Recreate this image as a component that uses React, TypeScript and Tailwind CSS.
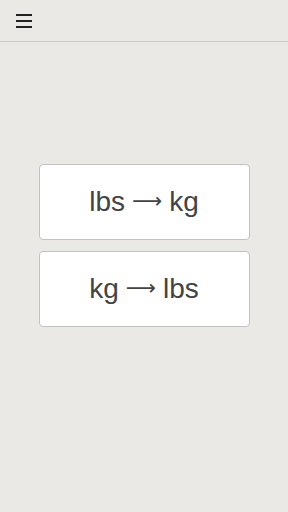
import React from "react";

const options = [
  ["lbs", "kg"],
  ["kg", "lbs"],
];

const App = () => {
  return (
    <div
      className="flex h-[512px] w-[288px] flex-col bg-[#ebe9e6] text-[#444]"
      style={{ fontFamily: '"Liberation Sans", Arial, sans-serif' }}
    >
      <header className="flex h-[42px] shrink-0 items-center border-b border-[#c9c9c9] px-4">
        <button type="button" aria-label="Menu" className="flex h-4 w-4 flex-col justify-between py-[1px]">
          <span className="h-[2px] w-4 bg-[#222]" />
          <span className="h-[2px] w-4 bg-[#222]" />
          <span className="h-[2px] w-4 bg-[#222]" />
        </button>
      </header>
      <main className="flex flex-col items-center gap-[11px] pt-[122px]">
        {options.map(([from, to]) => (
          <button
            key={from}
            type="button"
            className="flex h-[76px] w-[211px] items-center justify-center rounded-[4px] border border-[#c2c2c2] bg-white text-[28px] text-[#444]"
          >
            {from}
            <span className="mx-[7px] font-['DejaVu_Sans',sans-serif] text-[21px]">⟶</span>
            {to}
          </button>
        ))}
      </main>
    </div>
  );
};

export default App;
